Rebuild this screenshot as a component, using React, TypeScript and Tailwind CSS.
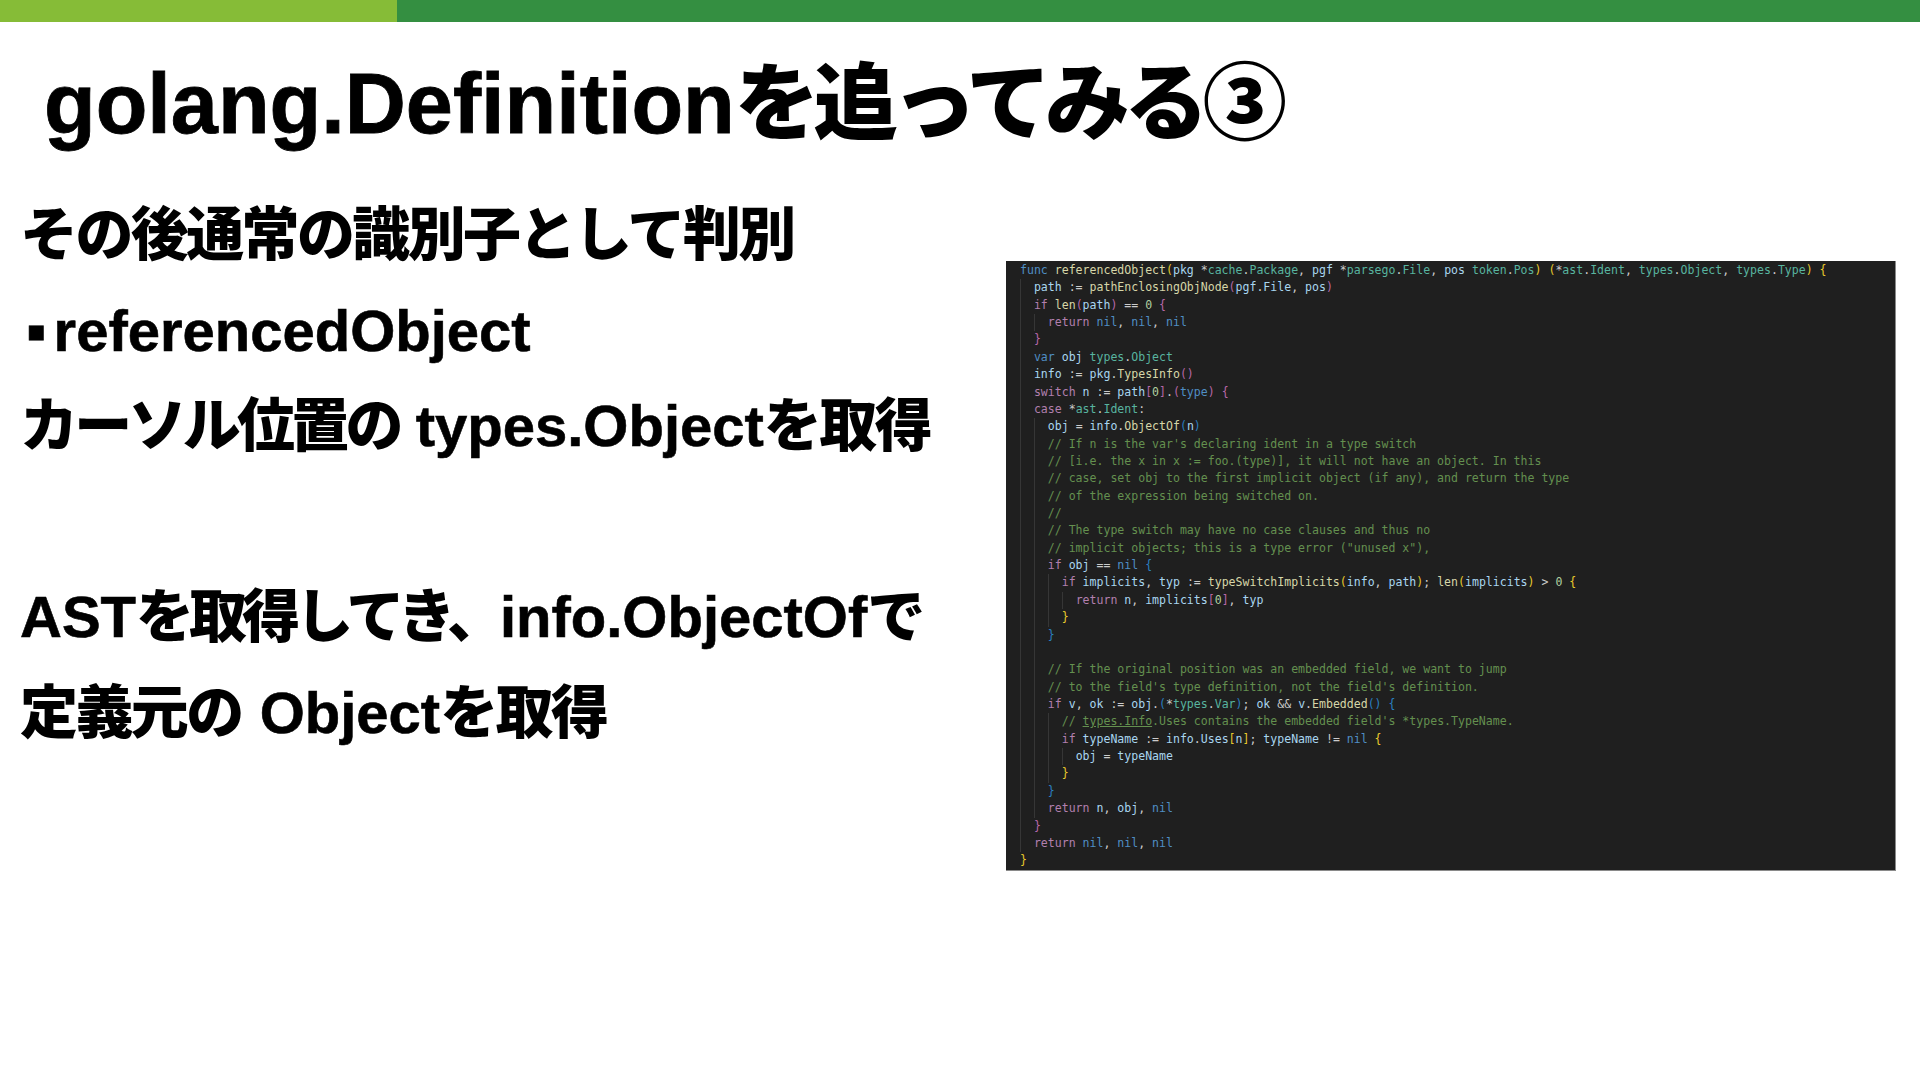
const colors = {
  k: "text-[#b27fae]",
  b: "text-[#4f8ec4]",
  v: "text-[#a9d6f0]",
  f: "text-[#d6d6a8]",
  t: "text-[#58b49f]",
  c: "text-[#64904f]",
  u: "text-[#64904f] underline",
  w: "text-[#cccccc]",
  g: "text-[#e8c92c]",
  p: "text-[#b767a8]",
  l: "text-[#2a7fc0]",
  n: "text-[#b0cfa0]",
};

type Color = keyof typeof colors;
type Token = [Color, string];

const code: [number, Token[]][] = [
  [0, [["b", "func "], ["f", "referencedObject"], ["g", "("], ["v", "pkg "], ["w", "*"], ["t", "cache"], ["w", "."], ["t", "Package"], ["w", ", "], ["v", "pgf "], ["w", "*"], ["t", "parsego"], ["w", "."], ["t", "File"], ["w", ", "], ["v", "pos "], ["t", "token"], ["w", "."], ["t", "Pos"], ["g", ") ("], ["w", "*"], ["t", "ast"], ["w", "."], ["t", "Ident"], ["w", ", "], ["t", "types"], ["w", "."], ["t", "Object"], ["w", ", "], ["t", "types"], ["w", "."], ["t", "Type"], ["g", ") {"]]],
  [1, [["v", "path "], ["w", ":= "], ["f", "pathEnclosingObjNode"], ["p", "("], ["v", "pgf"], ["w", "."], ["v", "File"], ["w", ", "], ["v", "pos"], ["p", ")"]]],
  [1, [["k", "if "], ["f", "len"], ["p", "("], ["v", "path"], ["p", ")"], ["w", " == "], ["n", "0 "], ["p", "{"]]],
  [2, [["k", "return "], ["b", "nil"], ["w", ", "], ["b", "nil"], ["w", ", "], ["b", "nil"]]],
  [1, [["p", "}"]]],
  [1, [["b", "var "], ["v", "obj "], ["t", "types"], ["w", "."], ["t", "Object"]]],
  [1, [["v", "info "], ["w", ":= "], ["v", "pkg"], ["w", "."], ["f", "TypesInfo"], ["p", "()"]]],
  [1, [["k", "switch "], ["v", "n "], ["w", ":= "], ["v", "path"], ["p", "["], ["n", "0"], ["p", "]"], ["w", "."], ["p", "("], ["b", "type"], ["p", ") {"]]],
  [1, [["k", "case "], ["w", "*"], ["t", "ast"], ["w", "."], ["t", "Ident"], ["w", ":"]]],
  [2, [["v", "obj "], ["w", "= "], ["v", "info"], ["w", "."], ["f", "ObjectOf"], ["l", "("], ["v", "n"], ["l", ")"]]],
  [2, [["c", "// If n is the var's declaring ident in a type switch"]]],
  [2, [["c", "// [i.e. the x in x := foo.(type)], it will not have an object. In this"]]],
  [2, [["c", "// case, set obj to the first implicit object (if any), and return the type"]]],
  [2, [["c", "// of the expression being switched on."]]],
  [2, [["c", "//"]]],
  [2, [["c", "// The type switch may have no case clauses and thus no"]]],
  [2, [["c", "// implicit objects; this is a type error (\"unused x\"),"]]],
  [2, [["k", "if "], ["v", "obj "], ["w", "== "], ["b", "nil "], ["l", "{"]]],
  [3, [["k", "if "], ["v", "implicits"], ["w", ", "], ["v", "typ "], ["w", ":= "], ["f", "typeSwitchImplicits"], ["g", "("], ["v", "info"], ["w", ", "], ["v", "path"], ["g", ")"], ["w", "; "], ["f", "len"], ["g", "("], ["v", "implicits"], ["g", ")"], ["w", " > "], ["n", "0 "], ["g", "{"]]],
  [4, [["k", "return "], ["v", "n"], ["w", ", "], ["v", "implicits"], ["p", "["], ["n", "0"], ["p", "]"], ["w", ", "], ["v", "typ"]]],
  [3, [["g", "}"]]],
  [2, [["l", "}"]]],
  [2, []],
  [2, [["c", "// If the original position was an embedded field, we want to jump"]]],
  [2, [["c", "// to the field's type definition, not the field's definition."]]],
  [2, [["k", "if "], ["v", "v"], ["w", ", "], ["v", "ok "], ["w", ":= "], ["v", "obj"], ["w", "."], ["l", "("], ["w", "*"], ["t", "types"], ["w", "."], ["t", "Var"], ["l", ")"], ["w", "; "], ["v", "ok "], ["w", "&& "], ["v", "v"], ["w", "."], ["f", "Embedded"], ["l", "() {"]]],
  [3, [["c", "// "], ["u", "types.Info"], ["c", ".Uses contains the embedded field's *types.TypeName."]]],
  [3, [["k", "if "], ["v", "typeName "], ["w", ":= "], ["v", "info"], ["w", "."], ["v", "Uses"], ["g", "["], ["v", "n"], ["g", "]"], ["w", "; "], ["v", "typeName "], ["w", "!= "], ["b", "nil "], ["g", "{"]]],
  [4, [["v", "obj "], ["w", "= "], ["v", "typeName"]]],
  [3, [["g", "}"]]],
  [2, [["l", "}"]]],
  [2, [["k", "return "], ["v", "n"], ["w", ", "], ["v", "obj"], ["w", ", "], ["b", "nil"]]],
  [1, [["p", "}"]]],
  [1, [["k", "return "], ["b", "nil"], ["w", ", "], ["b", "nil"], ["w", ", "], ["b", "nil"]]],
  [0, [["g", "}"]]],
];

function Jp({ children }: { children: string }) {
  return <span className="font-black tracking-[-0.045em] [-webkit-text-stroke:0]">{children}</span>;
}

function CodeLine({ indent, tokens }: { indent: number; tokens: Token[] }) {
  return (
    <div className="flex h-[17.36px] leading-[17.36px]">
      {Array.from({ length: indent }).map((_, i) => (
        <span key={i} className="w-[13.92px] shrink-0 border-l border-[#363636]" />
      ))}
      <span className="whitespace-pre">
        {tokens.map(([color, text], i) => (
          <span key={i} className={colors[color]}>{text}</span>
        ))}
      </span>
    </div>
  );
}

export default function App() {
  return (
    <div className="h-[1081px] w-[1920px] overflow-hidden bg-white font-['Liberation_Sans','Noto_Sans_CJK_JP',sans-serif] font-bold text-black">
      <div className="flex h-[22px]">
        <div className="w-[397px] bg-[#86bc37]" />
        <div className="flex-1 bg-[#348f41]" />
      </div>

      <h1 className="flex h-[165px] items-center pl-[44px] text-[84.6px] [-webkit-text-stroke:0.8px_#000]">
        <span>golang.Definition<span className="font-black tracking-[-0.07em] [-webkit-text-stroke:0]">を追ってみる③</span></span>
      </h1>

      <div className="flex">
        <div className="w-[1006px] pl-[20px] text-[58px] leading-[95.5px] [-webkit-text-stroke:0.6px_#000]">
          <p><Jp>その後通常の識別子として判別</Jp></p>
          <p><span className="ml-[6px] mr-[7px]">▪</span>referencedObject</p>
          <p><span className="font-black tracking-[-0.065em] [-webkit-text-stroke:0]">カーソル位置の</span> types.Object<Jp>を取得</Jp></p>
          <p className="h-[95.5px]" />
          <p>AST<span className="font-black tracking-[-0.085em] [-webkit-text-stroke:0]">を取得してき、</span>info.ObjectOf<Jp>で</Jp></p>
          <p><Jp>定義元の</Jp><span className="ml-[2px]"> Object</span><Jp>を取得</Jp></p>
        </div>

        <div className="mt-[74px] h-[610px] w-[890px] border-r border-b border-[#8a8a8a] bg-[#1f1f1f] pl-[14px] pt-[1px] font-['DejaVu_Sans_Mono',monospace] text-[11.56px] font-normal [-webkit-text-stroke:0]">
          {code.map(([indent, tokens], i) => (
            <CodeLine key={i} indent={indent} tokens={tokens} />
          ))}
        </div>
      </div>
    </div>
  );
}
